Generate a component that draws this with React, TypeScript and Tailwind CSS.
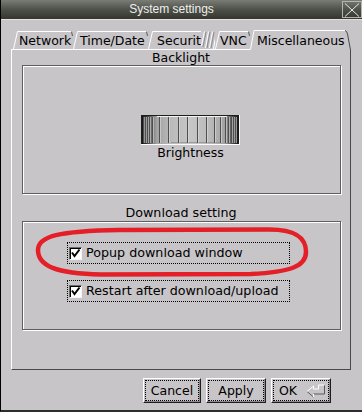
import type { ReactNode } from 'react'

const WHEEL_LINES = [2, 4, 6, 8, 11, 18, 27, 37, 46, 56, 65, 73, 79, 84, 87, 90, 92, 94]

function Tab({
  label,
  className,
  w,
  active,
}: {
  label: string
  className: string
  w: number
  active?: boolean
}) {
  return (
    <div
      className={`relative h-[20px] shrink-0 pt-[5px] text-[12.5px] leading-[14px] whitespace-nowrap ${active ? 'z-10' : ''} ${className}`}
    >
      <svg className="absolute left-0 top-0 overflow-visible" width={w} height={21}>
        {active ? (
          <>
            <path d={`M0 21 L3.5 1.5 L${w - 6} 1.5 L${w - 1.5} 16 L${w} 21 Z`} fill="#c8c5c8" />
            <path d={`M0.5 20.5 L4 1.5 L${w - 6} 1.5`} stroke="#fff" fill="none" />
            <path d={`M${w - 6} 1.5 Q${w - 4} 2 ${w - 3.5} 5 L${w - 0.5} 21`} stroke="#4a4a4a" fill="none" />
          </>
        ) : (
          <>
            <path d={`M0.5 20 L4.5 2.5 L${w - 1} 2.5`} stroke="#fff" fill="none" />
            <path d={`M${w - 1.5} 2.5 L${w - 0.5} 7`} stroke="#5a5a5a" fill="none" />
          </>
        )}
      </svg>
      <span className="relative">{label}</span>
    </div>
  )
}

function Wheel() {
  return (
    <svg width="99" height="30" viewBox="0 0 99 30">
      <defs>
        <linearGradient id="wheelg" x1="0" x2="1" y1="0" y2="0">
          <stop offset="0" stopColor="#141414" />
          <stop offset="0.07" stopColor="#4e4e4e" />
          <stop offset="0.15" stopColor="#a2a2a2" />
          <stop offset="0.3" stopColor="#bababa" />
          <stop offset="0.5" stopColor="#c6c6c6" />
          <stop offset="0.7" stopColor="#bababa" />
          <stop offset="0.85" stopColor="#a2a2a2" />
          <stop offset="0.93" stopColor="#4e4e4e" />
          <stop offset="1" stopColor="#141414" />
        </linearGradient>
      </defs>
      <rect x="0" y="0" width="99" height="30" fill="#fbfbfb" />
      <rect x="0" y="0" width="98" height="29" fill="#1e1e1e" />
      <rect x="1" y="1" width="97" height="28" fill="url(#wheelg)" />
      <line x1="16" y1="1.5" x2="86" y2="1.5" stroke="#f2f2f2" />
      <line x1="30" y1="27.5" x2="80" y2="27.5" stroke="#9a9a9a" />
      {WHEEL_LINES.map((x) => (
        <g key={x}>
          <line x1={x + 0.5} y1="2" x2={x + 0.5} y2="28" stroke="#4f4f4f" />
          <line x1={x + 1.5} y1="2" x2={x + 1.5} y2="28" stroke="#dcdcdc" strokeOpacity="0.6" />
        </g>
      ))}
    </svg>
  )
}

function CheckRow({ label }: { label: string }) {
  return (
    <div className="flex items-center w-[223px] h-[22px] border border-dotted border-black pl-[1px]">
      <span className="relative w-[13px] h-[13px] shrink-0 bg-white border border-t-[#6a6a6a] border-l-[#6a6a6a] border-r-[#f4f4f4] border-b-[#f4f4f4] shadow-[inset_1px_1px_0_#000]">
        <svg className="absolute left-0 top-0" width="11" height="11" viewBox="0 0 11 11">
          <path d="M2 4.5 L4.5 8 L9.5 1.5" stroke="#000" strokeWidth="2" fill="none" />
        </svg>
      </span>
      <span className="ml-[4px] whitespace-nowrap text-[12.7px] leading-[14px]">{label}</span>
    </div>
  )
}

function Btn({ children, className }: { children: ReactNode; className: string }) {
  return (
    <div
      className={`relative h-[25px] flex items-center border border-t-white border-l-white border-r-[#1e1e1e] border-b-[#1e1e1e] shadow-[inset_-1px_-1px_0_#8a888a] text-[12.5px] leading-[14px] pt-[1px] ${className}`}
    >
      <div className="absolute inset-[1px] border border-dotted border-black" />
      {children}
    </div>
  )
}

export default function App() {
  return (
    <div className="relative w-[362px] h-[412px] overflow-hidden flex flex-col bg-[#c8c5c8] border-l border-black border-b-2 border-b-[#2e2e2e] text-black font-['DejaVu_Sans',sans-serif]">
      {/* title bar */}
      <div className="flex h-[20px] shrink-0 border-b border-[#e2e0e2] bg-gradient-to-b from-[#7a7d76] via-[#4e5149] to-[#35372f]">
        <div className="flex-1 flex items-center justify-center pb-[1px] text-[12px] leading-none text-[#eeeeee] font-['Liberation_Sans',sans-serif]">
          System settings
        </div>
        <div className="relative w-[20px] h-[17px] mt-[1px] border border-[#b3b5ae]">
          <svg className="absolute left-[1px] top-[1px]" width="16" height="14" viewBox="0 0 16 14">
            <path d="M1 0.5 L15 13.5 M15 0.5 L1 13.5" stroke="#e8e8e8" strokeWidth="1" fill="none" />
          </svg>
        </div>
      </div>

      {/* tabs */}
      <div className="flex mt-[9px] ml-[12px] h-[20px]">
        <Tab label="Network" w={60} className="w-[60px] pl-[6px]" />
        <Tab label="Time/Date" w={75} className="w-[75px] pl-[7px]" />
        <div className="relative w-[53px] h-[20px] overflow-hidden">
          <Tab label="Security" w={80} className="w-[80px] pl-[9px]" />
        </div>
        <div className="relative w-[14px] h-[20px]">
          <svg className="absolute left-0 top-0" width="14" height="20">
            <path d="M0.5 17 L3.5 2.5 M4.5 19 L7.5 2.5 M8.5 19 L11.5 2.5 M12.5 20 L15.5 2.5" stroke="#fff" fill="none" />
            <path d="M2 18 L5 3 M6 19 L9 3 M10 19 L13 3" stroke="#8c8a8c" fill="none" />
          </svg>
        </div>
        <Tab label="VNC" w={35} className="w-[35px] pl-[5px]" />
        <Tab label="Miscellaneous" w={101} className="w-[101px] pl-[7px]" active />
      </div>

      {/* tab pane */}
      <div className="ml-[10px] w-[340px] h-[321px] border border-t-white border-l-white border-r-[#4a4a4a] border-b-[#4a4a4a] flex flex-col">
        <div className="mt-[1px] h-[14px] text-center text-[12.5px] leading-[14px]">Backlight</div>
        <div className="ml-[10px] w-[319px] h-[129px] border border-[#5f5f5f] shadow-[inset_1px_1px_0_#fff,1px_1px_0_#fff] flex flex-col items-center pt-[49px] pl-[18px]">
          <Wheel />
          <div className="mt-[1px] text-[12.5px] leading-[14px]">Brightness</div>
        </div>
        <div className="mt-[12px] h-[14px] text-center text-[12.7px] leading-[14px]">Download setting</div>
        <div className="mt-[1px] ml-[10px] w-[319px] h-[109px] border border-[#5f5f5f] shadow-[inset_1px_1px_0_#fff,1px_1px_0_#fff] flex flex-col gap-[16px] pt-[20px] pl-[44px]">
          <CheckRow label="Popup download window" />
          <CheckRow label="Restart after download/upload" />
        </div>
      </div>

      {/* buttons */}
      <div className="flex justify-end gap-[5px] mt-[8px] pr-[31px]">
        <Btn className="w-[58px] justify-center">Cancel</Btn>
        <Btn className="w-[60px] justify-center">Apply</Btn>
        <Btn className="w-[60px] pl-[7px]">
          <span>OK</span>
          <svg className="ml-[9px]" width="20" height="14" viewBox="0 0 20 14">
            <path d="M7.5 10 L18.5 10 L18.5 1" stroke="#5a5a5a" fill="none" />
            <path d="M7.5 13 L1 7.5" stroke="#5a5a5a" fill="none" />
            <path d="M1 7.5 L7.5 2 L7.5 5 L12.5 5 L12.5 1 L18.5 1" stroke="#fff" fill="none" />
            <path d="M7.5 10 L7.5 13" stroke="#fff" fill="none" />
          </svg>
        </Btn>
      </div>

      {/* red annotation */}
      <svg className="absolute left-0 top-0 pointer-events-none" width="361" height="412">
        <path
          d="M37 250 C37 236 58 231 118 230 L268 229.5 C297 229.5 305 239 305 252 C305 266 290 272 250 274 L100 274.5 C55 273.5 37 266 37 250 Z"
          stroke="#e41f28"
          strokeWidth="4.5"
          fill="none"
        />
      </svg>
    </div>
  )
}
